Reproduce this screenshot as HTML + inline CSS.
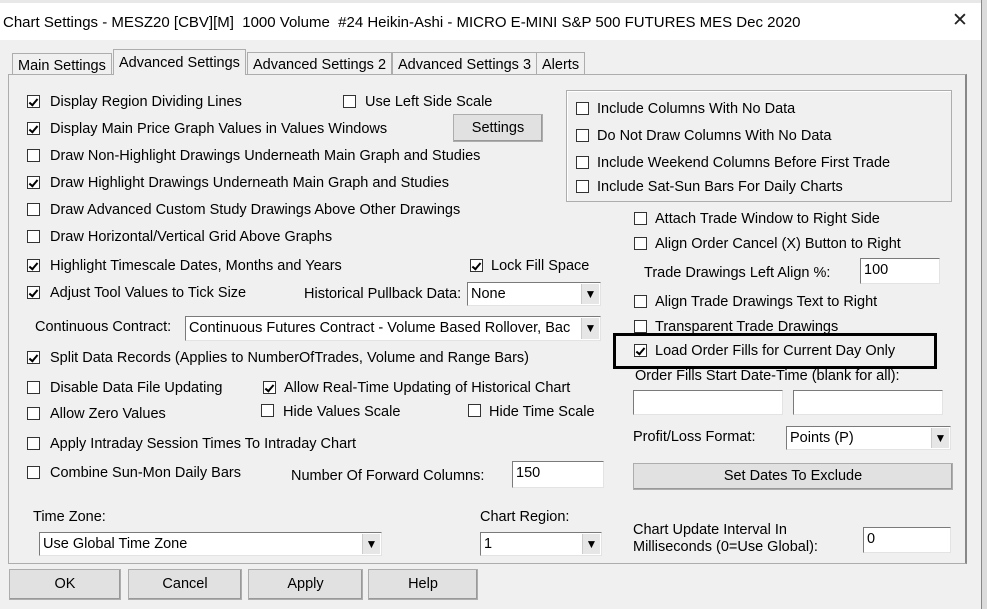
<!DOCTYPE html>
<html><head><meta charset="utf-8"><style>
*{margin:0;padding:0;box-sizing:border-box}
body{width:987px;height:609px;overflow:hidden;background:#f0f0f0;font-family:"Liberation Sans",sans-serif;font-size:14.5px;color:#000;position:relative}
.a{position:absolute;white-space:nowrap;line-height:19px}
.cb{position:absolute;width:13px;height:13px;border:1px solid #333;background:#fff}
.cb.c::after{content:"";position:absolute;left:3px;top:1px;width:3px;height:7px;border:solid #000;border-width:0 2px 2px 0;transform:rotate(40deg)}
.in{position:absolute;background:#fff;border:1px solid #7a7a7a;border-right-color:#e3e3e3;border-bottom-color:#e3e3e3;padding-left:3px;line-height:23px}
.dd::after{content:"▼";position:absolute;right:1px;top:1px;bottom:1px;width:17px;background:#e6e6e6;font-size:12px;text-align:center;line-height:20px;border-left:1px solid #ccc}
.btn{position:absolute;background:#e1e1e1;border:1px solid #adadad;text-align:center;box-shadow:inset -1px -1px #999}
.tab{position:absolute;top:51px;height:23px;border:1px solid #adadad;border-bottom:none;background:#f0f0f0;padding:0 5px;line-height:24px}
</style></head><body>
<div style="position:absolute;left:0;top:0;width:987px;height:4px;background:#e8e8e8"></div>
<div style="position:absolute;left:0;top:3px;width:982px;height:37px;background:#fff"></div>
<div style="position:absolute;left:981px;top:0;width:6px;height:609px;background:#dcdcdc;border-left:1px solid #888"></div>
<div class="a" style="left:3px;top:13px;font-size:15px">Chart Settings - MESZ20 [CBV][M]&nbsp; 1000 Volume&nbsp; #24 Heikin-Ashi - MICRO E-MINI S&amp;P 500 FUTURES MES Dec 2020</div>
<div class="a" style="left:952px;top:11px;font-size:19px;color:#222">✕</div>

<div style="position:absolute;left:8px;top:74px;width:959px;height:490px;border:1px solid #adadad;border-right:2px solid #888;background:#f0f0f0"></div>
<div class="tab" style="left:12px;top:53px;height:21px">Main Settings</div>
<div class="tab" style="left:113px;top:49px;height:26px;border-bottom:none;z-index:2;background:#f0f0f0;padding-top:1px">Advanced Settings</div>
<div class="tab" style="left:247px;top:52px;height:22px">Advanced Settings 2</div>
<div class="tab" style="left:392px;top:52px;height:22px">Advanced Settings 3</div>
<div class="tab" style="left:536px;top:52px;height:22px">Alerts</div>

<div class="cb c" style="left:27px;top:95px"></div><div class="a" style="left:50px;top:93px">Display Region Dividing Lines</div>
<div class="cb" style="left:343px;top:95px"></div><div class="a" style="left:365px;top:93px">Use Left Side Scale</div>
<div class="cb c" style="left:27px;top:122px"></div><div class="a" style="left:50px;top:120px">Display Main Price Graph Values in Values Windows</div>
<div class="btn" style="left:453px;top:114px;width:90px;height:28px;line-height:26px">Settings</div>
<div class="cb" style="left:27px;top:149px"></div><div class="a" style="left:50px;top:147px">Draw Non-Highlight Drawings Underneath Main Graph and Studies</div>
<div class="cb c" style="left:27px;top:176px"></div><div class="a" style="left:50px;top:174px">Draw Highlight Drawings Underneath Main Graph and Studies</div>
<div class="cb" style="left:27px;top:203px"></div><div class="a" style="left:50px;top:201px">Draw Advanced Custom Study Drawings Above Other Drawings</div>
<div class="cb" style="left:27px;top:230px"></div><div class="a" style="left:50px;top:228px">Draw Horizontal/Vertical Grid Above Graphs</div>
<div class="cb c" style="left:27px;top:259px"></div><div class="a" style="left:50px;top:257px">Highlight Timescale Dates, Months and Years</div>
<div class="cb c" style="left:470px;top:259px"></div><div class="a" style="left:491px;top:257px">Lock Fill Space</div>
<div class="cb c" style="left:27px;top:286px"></div><div class="a" style="left:50px;top:284px">Adjust Tool Values to Tick Size</div>
<div class="a" style="left:304px;top:285px">Historical Pullback Data:</div>
<div class="in dd" style="left:467px;top:282px;width:134px;height:24px">None</div>
<div class="a" style="left:35px;top:318px">Continuous Contract:</div>
<div class="in dd" style="left:185px;top:316px;width:416px;height:25px;overflow:hidden">Continuous Futures Contract - Volume Based Rollover, Bac</div>
<div class="cb c" style="left:27px;top:351px"></div><div class="a" style="left:50px;top:349px">Split Data Records (Applies to NumberOfTrades, Volume and Range Bars)</div>
<div class="cb" style="left:27px;top:381px"></div><div class="a" style="left:50px;top:379px">Disable Data File Updating</div>
<div class="cb c" style="left:263px;top:381px"></div><div class="a" style="left:284px;top:379px">Allow Real-Time Updating of Historical Chart</div>
<div class="cb" style="left:27px;top:407px"></div><div class="a" style="left:50px;top:405px">Allow Zero Values</div>
<div class="cb" style="left:261px;top:404px"></div><div class="a" style="left:283px;top:403px">Hide Values Scale</div>
<div class="cb" style="left:468px;top:404px"></div><div class="a" style="left:489px;top:403px">Hide Time Scale</div>
<div class="cb" style="left:27px;top:437px"></div><div class="a" style="left:50px;top:435px">Apply Intraday Session Times To Intraday Chart</div>
<div class="cb" style="left:27px;top:466px"></div><div class="a" style="left:50px;top:464px">Combine Sun-Mon Daily Bars</div>
<div class="a" style="left:291px;top:467px">Number Of Forward Columns:</div>
<div class="in" style="left:512px;top:461px;width:92px;height:27px">150</div>
<div class="a" style="left:33px;top:508px">Time Zone:</div>
<div class="in dd" style="left:39px;top:532px;width:343px;height:24px">Use Global Time Zone</div>
<div class="a" style="left:480px;top:508px">Chart Region:</div>
<div class="in dd" style="left:480px;top:532px;width:122px;height:24px">1</div>

<div style="position:absolute;left:566px;top:90px;width:386px;height:112px;border:1px solid #adadad;box-shadow:inset 1px 1px #fff"></div>
<div class="cb" style="left:576px;top:102px"></div><div class="a" style="left:597px;top:100px">Include Columns With No Data</div>
<div class="cb" style="left:576px;top:129px"></div><div class="a" style="left:597px;top:127px">Do Not Draw Columns With No Data</div>
<div class="cb" style="left:576px;top:156px"></div><div class="a" style="left:597px;top:154px">Include Weekend Columns Before First Trade</div>
<div class="cb" style="left:576px;top:180px"></div><div class="a" style="left:597px;top:178px">Include Sat-Sun Bars For Daily Charts</div>
<div class="cb" style="left:634px;top:212px"></div><div class="a" style="left:655px;top:210px">Attach Trade Window to Right Side</div>
<div class="cb" style="left:634px;top:237px"></div><div class="a" style="left:655px;top:235px">Align Order Cancel (X) Button to Right</div>
<div class="a" style="left:644px;top:264px">Trade Drawings Left Align %:</div>
<div class="in" style="left:860px;top:258px;width:80px;height:26px">100</div>
<div class="cb" style="left:634px;top:295px"></div><div class="a" style="left:655px;top:293px">Align Trade Drawings Text to Right</div>
<div class="cb" style="left:634px;top:320px"></div><div class="a" style="left:655px;top:318px">Transparent Trade Drawings</div>
<div style="position:absolute;left:613px;top:333px;width:324px;height:36px;border:3px solid #000;background:#f0f0f0"></div>
<div class="cb c" style="left:634px;top:344px"></div><div class="a" style="left:655px;top:342px">Load Order Fills for Current Day Only</div>
<div class="a" style="left:635px;top:367px">Order Fills Start Date-Time (blank for all):</div>
<div class="in" style="left:633px;top:390px;width:150px;height:25px"></div>
<div class="in" style="left:793px;top:390px;width:150px;height:25px"></div>
<div class="a" style="left:633px;top:428px">Profit/Loss Format:</div>
<div class="in dd" style="left:786px;top:426px;width:165px;height:24px">Points (P)</div>
<div class="btn" style="left:633px;top:463px;width:320px;height:27px;line-height:25px">Set Dates To Exclude</div>
<div class="a" style="left:633px;top:521px">Chart Update Interval In</div>
<div class="a" style="left:633px;top:538px">Milliseconds (0=Use Global):</div>
<div class="in" style="left:863px;top:527px;width:88px;height:26px">0</div>

<div class="btn" style="left:9px;top:569px;width:112px;height:31px;line-height:29px">OK</div>
<div class="btn" style="left:128px;top:569px;width:114px;height:31px;line-height:29px">Cancel</div>
<div class="btn" style="left:248px;top:569px;width:115px;height:31px;line-height:29px">Apply</div>
<div class="btn" style="left:368px;top:569px;width:110px;height:31px;line-height:29px">Help</div>
</body></html>
